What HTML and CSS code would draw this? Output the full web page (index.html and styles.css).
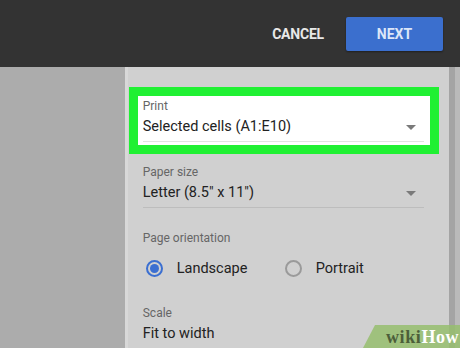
FILE: index.html
```html
<!DOCTYPE html>
<html>
<head>
<meta charset="utf-8">
<link rel="stylesheet" href="styles.css">
</head>
<body>
<div class="screen">
  <header class="topbar">
    <span class="cancel">CANCEL</span>
    <span class="next">NEXT</span>
  </header>
  <main class="main">
    <div class="backdrop"></div>
    <section class="panel">
      <div class="highlight">
        <div class="field">
          <div class="label">Print</div>
          <div class="value"><span>Selected cells (A1:E10)</span><span class="arrow"></span></div>
        </div>
      </div>
      <div class="field plain paper">
        <div class="label">Paper size</div>
        <div class="value"><span>Letter (8.5" x 11")</span><span class="arrow"></span></div>
      </div>
      <div class="group orientation">
        <div class="label">Page orientation</div>
        <div class="radios">
          <span class="radio checked"></span><span class="rtext">Landscape</span>
          <span class="radio"></span><span class="rtext">Portrait</span>
        </div>
      </div>
      <div class="group scale">
        <div class="label">Scale</div>
        <div class="value noline"><span>Fit to width</span></div>
      </div>
    </section>
    <div class="scrollbar"><div class="track"></div><div class="edge"></div></div>
  </main>
  <div class="wikihow"><span class="wiki">wiki</span><span class="how">How</span></div>
</div>
</body>
</html>
```
FILE: styles.css
```css
html, body {
  margin: 0;
  padding: 0;
}
body {
  width: 460px;
  height: 348px;
  overflow: hidden;
  font-family: Roboto, "Liberation Sans", sans-serif;
}
.screen {
  position: relative;
  width: 460px;
  height: 348px;
  display: flex;
  flex-direction: column;
  background: #acacac;
}
.topbar {
  height: 67px;
  flex: none;
  background: #333333;
  display: flex;
  align-items: center;
  justify-content: flex-end;
  padding-right: 17px;
  gap: 22px;
}
.cancel {
  color: #e8e8e8;
  font-weight: 700;
  font-size: 14px;
  letter-spacing: -0.2px;
}
.next {
  width: 97px;
  height: 34px;
  background: #3b6fce;
  border-radius: 2px;
  box-shadow: 0 1px 2px rgba(0,0,0,0.4);
  color: #dce6f8;
  font-weight: 700;
  font-size: 14px;
  display: flex;
  align-items: center;
  justify-content: center;
}
.main {
  flex: 1;
  display: flex;
}
.backdrop {
  width: 125px;
  background: #acacac;
}
.panel {
  width: 321px;
  background: #d0d0d0;
  border-left: 3px solid #d8d8d8;
  padding: 20px 0 0 1px;
}
.highlight {
  width: 292px;
  border: 9px solid #20f033;
  background: #ffffff;
  padding: 2px 0 3px 0;
}
.field {
  width: 281px;
  margin-left: 5px;
  padding-bottom: 3px;
  border-bottom: 1px solid #e2e2e2;
}
.field.plain {
  margin-left: 14px;
  border-bottom-color: #bdbdbd;
}
.paper {
  margin-top: 10px;
}
.label {
  font-size: 12px;
  line-height: 16px;
  color: #666666;
  margin-bottom: 2px;
}
.value {
  font-size: 14.5px;
  line-height: 22px;
  color: #222222;
  display: flex;
  justify-content: space-between;
  align-items: center;
}
.arrow {
  width: 0;
  height: 0;
  border-left: 5px solid transparent;
  border-right: 5px solid transparent;
  border-top: 5px solid #7a7a7a;
  margin-right: 8px;
}
.group {
  margin-left: 14px;
}
.orientation {
  margin-top: 22px;
}
.radios {
  margin-top: 8px;
  height: 28px;
  display: flex;
  align-items: center;
}
.radio {
  width: 13px;
  height: 13px;
  border: 2px solid #9a9a9a;
  border-radius: 50%;
  margin-left: 3px;
  position: relative;
}
.radio.checked {
  border-color: #3b6fd1;
}
.radio.checked::after {
  content: "";
  position: absolute;
  left: 2px;
  top: 2px;
  width: 9px;
  height: 9px;
  border-radius: 50%;
  background: #3b6fd1;
}
.rtext {
  font-size: 14.5px;
  color: #222222;
  margin-left: 14px;
  width: 108px;
}
.rtext + .radio {
  margin-left: 0;
}
.scale {
  margin-top: 23px;
}
.scrollbar {
  width: 11px;
  display: flex;
}
.track {
  width: 6px;
  background: #a4a4a4;
}
.edge {
  flex: 1;
  background: #bababa;
}
.wikihow {
  position: absolute;
  right: 0;
  bottom: 0;
  width: 97px;
  height: 23px;
  padding-left: 23px;
  background: rgba(150, 190, 110, 0.85);
  clip-path: polygon(12px 0, 100% 0, 100% 100%, 0 100%);
  font-family: "Liberation Serif", "DejaVu Serif", serif;
  font-weight: 700;
  font-size: 18px;
  letter-spacing: 0.6px;
  line-height: 25px;
  box-sizing: border-box;
  white-space: nowrap;
}
.wiki { color: #4c5e3a; }
.how { color: #ffffff; }
```
